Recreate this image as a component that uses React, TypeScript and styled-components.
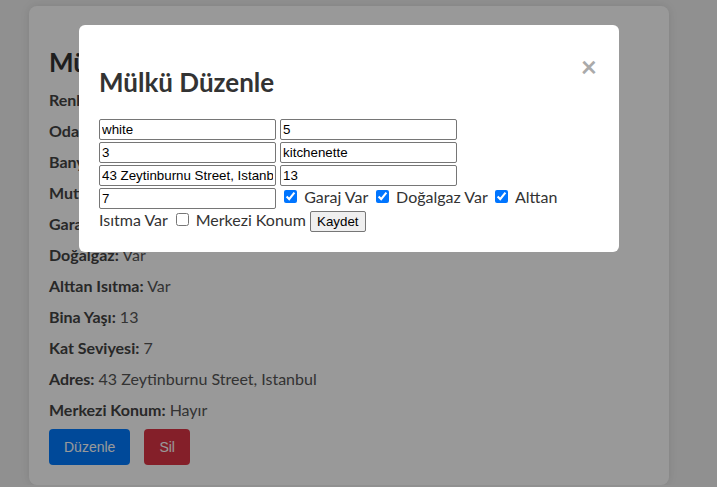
import React, { useState } from 'react';
import styled, { createGlobalStyle } from 'styled-components';

const GlobalStyle = createGlobalStyle`
  html, body {
    margin: 0;
    padding: 0;
    background: #f0f0f0;
    font-family: Lato, "Noto Sans", sans-serif;
    color: #333;
  }
`;

interface Property {
  color: string;
  rooms: number;
  bathrooms: number;
  kitchen: string;
  garage: boolean;
  naturalGas: boolean;
  floorHeating: boolean;
  buildingAge: number;
  floorLevel: number;
  address: string;
  central: boolean;
}

const initialProperty: Property = {
  color: 'white',
  rooms: 5,
  bathrooms: 3,
  kitchen: 'kitchenette',
  garage: true,
  naturalGas: true,
  floorHeating: true,
  buildingAge: 13,
  floorLevel: 7,
  address: '43 Zeytinburnu Street, Istanbul',
  central: false,
};

const yesNo = (v: boolean) => (v ? 'Var' : 'Yok');

const App: React.FC = () => {
  const [property, setProperty] = useState<Property>(initialProperty);
  const [draft, setDraft] = useState<Property>(initialProperty);
  const [open, setOpen] = useState(true);

  const changeField = (e: React.ChangeEvent<HTMLInputElement>) => {
    const { name, value, type, checked } = e.target;
    setDraft((prev) => ({ ...prev, [name]: type === 'checkbox' ? checked : value }));
  };

  const save = () => {
    setProperty(draft);
    setOpen(false);
  };

  const rows: [string, string | number][] = [
    ['Renk', property.color],
    ['Oda Sayısı', property.rooms],
    ['Banyo Sayısı', property.bathrooms],
    ['Mutfak', property.kitchen],
    ['Garaj', yesNo(property.garage)],
    ['Doğalgaz', yesNo(property.naturalGas)],
    ['Alttan Isıtma', yesNo(property.floorHeating)],
    ['Bina Yaşı', property.buildingAge],
    ['Kat Seviyesi', property.floorLevel],
    ['Adres', property.address],
    ['Merkezi Konum', property.central ? 'Evet' : 'Hayır'],
  ];

  return (
    <>
      <GlobalStyle />
      <Page>
        <Card>
          <CardTitle>Mülk Detayları</CardTitle>
          <Rows>
            {rows.map(([label, value]) => (
              <Row key={label}>
                <strong>{label}:</strong> {value}
              </Row>
            ))}
          </Rows>
          <Actions>
            <ActionButton variant="primary" onClick={() => setOpen(true)}>
              Düzenle
            </ActionButton>
            <ActionButton variant="danger">Sil</ActionButton>
          </Actions>
        </Card>
      </Page>

      {open && (
        <Overlay>
          <Dialog>
            <Close onClick={() => setOpen(false)}>&times;</Close>
            <DialogTitle>Mülkü Düzenle</DialogTitle>
            <Form onSubmit={(e) => e.preventDefault()}>
              <TextInput name="color" value={draft.color} onChange={changeField} />{' '}
              <TextInput name="rooms" value={draft.rooms} onChange={changeField} />{' '}
              <TextInput name="bathrooms" value={draft.bathrooms} onChange={changeField} />{' '}
              <TextInput name="kitchen" value={draft.kitchen} onChange={changeField} />{' '}
              <TextInput name="address" value={draft.address} onChange={changeField} />{' '}
              <TextInput name="buildingAge" value={draft.buildingAge} onChange={changeField} />{' '}
              <TextInput name="floorLevel" value={draft.floorLevel} onChange={changeField} />{' '}
              <label>
                <Check name="garage" checked={draft.garage} onChange={changeField} /> Garaj Var
              </label>{' '}
              <label>
                <Check name="naturalGas" checked={draft.naturalGas} onChange={changeField} /> Doğalgaz Var
              </label>{' '}
              <label>
                <Check name="floorHeating" checked={draft.floorHeating} onChange={changeField} /> Alttan Isıtma Var
              </label>{' '}
              <label>
                <Check name="central" checked={draft.central} onChange={changeField} /> Merkezi Konum
              </label>{' '}
              <SaveButton type="button" onClick={save}>
                Kaydet
              </SaveButton>
            </Form>
          </Dialog>
        </Overlay>
      )}
    </>
  );
};

export default App;

const Page = styled.div`
  width: 698px;
  padding-top: 6px;
`;

const Card = styled.div`
  margin: 0 29px;
  padding: 20px;
  background: #fff;
  border-radius: 8px;
  box-shadow: 0 0 10px rgba(0, 0, 0, 0.1);
`;

const CardTitle = styled.h2`
  margin: 19px 0 10px;
  font-size: 26px;
  line-height: 34px;
  font-weight: 700;
  color: #333;
`;

const Rows = styled.div`
  display: flex;
  flex-direction: column;
  gap: 10px;
`;

const Row = styled.p`
  margin: 0;
  font-size: 16px;
  line-height: 21px;
  color: #555;

  strong {
    color: #444;
  }
`;

const Actions = styled.div`
  display: flex;
  gap: 14px;
  margin-top: 9px;
`;

const ActionButton = styled.button<{ variant: 'primary' | 'danger' }>`
  height: 36px;
  padding: 0 15px;
  border: 0;
  border-radius: 4px;
  font-family: 'Liberation Sans', Arial, sans-serif;
  font-size: 14px;
  color: #fff;
  cursor: pointer;
  background: ${({ variant }) => (variant === 'primary' ? '#007bff' : '#dc3545')};
`;

const Overlay = styled.div`
  position: fixed;
  inset: 0;
  padding: 25px 19px 0 0;
  background: rgba(0, 0, 0, 0.4);
`;

const Dialog = styled.div`
  width: 500px;
  margin: 0 auto;
  padding: 20px;
  background: #fff;
  border-radius: 6px;
`;

const Close = styled.span`
  float: right;
  margin: 7px 2px 0 0;
  font-size: 28px;
  line-height: 28px;
  font-weight: 700;
  color: #aaa;
  cursor: pointer;
`;

const DialogTitle = styled.h2`
  margin: 20px 0 18px;
  font-size: 26px;
  line-height: 34px;
  font-weight: 700;
  color: #333;
`;

const Form = styled.form`
  font-size: 16px;
  line-height: 22px;
  color: #333;
`;

const TextInput = styled.input.attrs({ type: 'text' })`
  box-sizing: border-box;
  width: 177px;
  height: 21px;
  margin: 0;
  padding: 0 2px;
  border: 1px solid #767676;
  border-radius: 2px;
  font-family: 'Liberation Sans', Arial, sans-serif;
  font-size: 13.333px;
  color: #000;
`;

const Check = styled.input.attrs({ type: 'checkbox' })`
  width: 13px;
  height: 13px;
  margin: 3px 3px 3px 4px;
`;

const SaveButton = styled.button`
  box-sizing: border-box;
  height: 21px;
  padding: 1px 6px;
  border: 1px solid #767676;
  border-radius: 2px;
  background: #efefef;
  font-family: 'Liberation Sans', Arial, sans-serif;
  font-size: 13.333px;
  color: #000;
`;
